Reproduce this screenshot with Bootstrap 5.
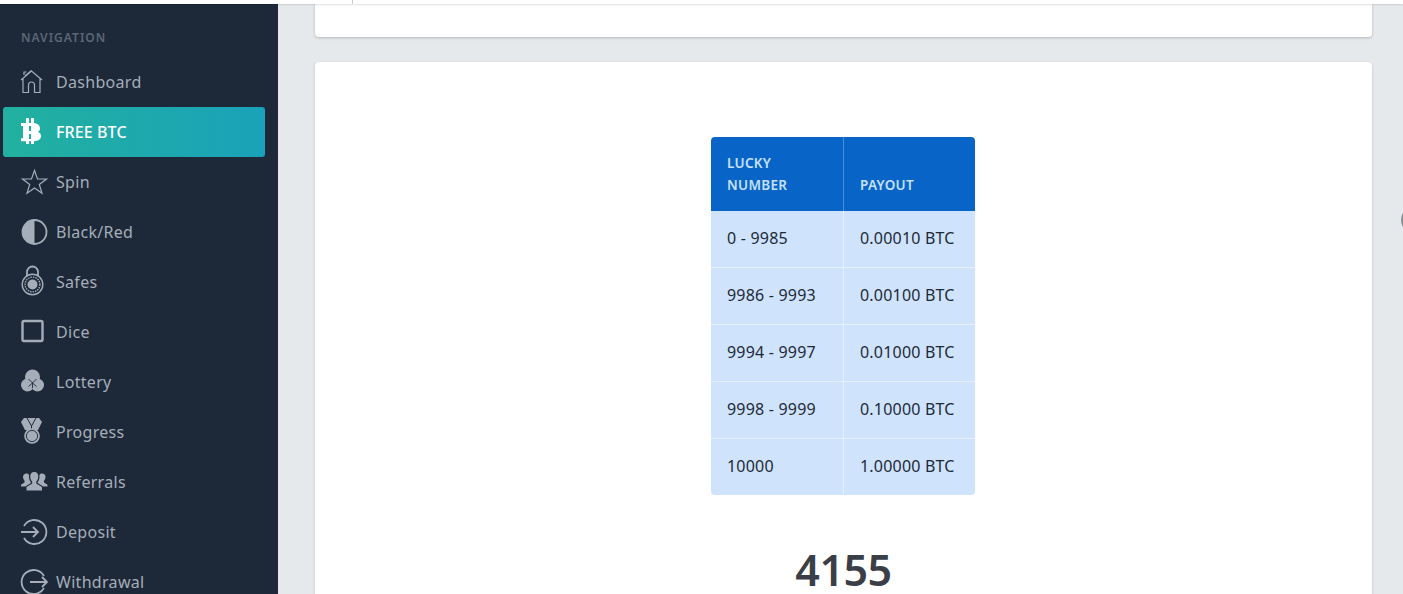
<!DOCTYPE html>
<html lang="en">
<head>
<meta charset="utf-8">
<title>FREE BTC</title>
<link href="https://cdn.jsdelivr.net/npm/bootstrap@5.3.0/dist/css/bootstrap.min.css" rel="stylesheet">
<style>
html,body{height:594px;overflow:hidden}
body{background:#e6e9ec;font-family:"Noto Sans","Liberation Sans",sans-serif;color:#3a3f47;position:relative}
.top-strip{height:4px;background:#fff;box-shadow:0 1px 2px rgba(0,0,0,.12);position:relative;z-index:2}
.top-tick{width:1px;height:4px;background:#c9cdd2;margin-left:352px}
.shell{height:590px}
.side-nav{width:278px;flex:none;background:#1d2939;overflow:hidden;padding:0 13px 0 3px}
.nav-head{font-size:12px;font-weight:600;letter-spacing:1px;color:#5b6675;padding:27px 0 0 18px;height:53px;line-height:13px}
.nav-row{height:50px;display:flex;align-items:center;color:#a5aeb8;font-size:16px;letter-spacing:.3px;text-decoration:none;border-radius:3px;padding-left:18px}
.nav-row svg{width:26px;height:26px;flex:none;margin-right:9px;overflow:visible}
.nav-row.is-on{background:linear-gradient(90deg,#22b19f,#19a2b9);color:#fff;font-weight:500;letter-spacing:.1px}
.main-pane{padding:0 31px 0 37px;min-width:0}
.panel-a{height:33px;background:#fff;border-radius:0 0 4px 4px;box-shadow:0 1px 3px rgba(0,0,0,.22);margin-bottom:25px}
.panel-b{background:#fff;border-radius:4px;box-shadow:0 1px 3px rgba(0,0,0,.18);padding-top:75px;height:700px;text-align:center}
.odds{width:264px;margin:0 0 45px 396px;border-collapse:separate;border-spacing:0;font-size:16px;letter-spacing:.2px;text-align:left}
.odds th{background:#0865c7;color:#c6e0fb;font-size:13.5px;font-weight:600;letter-spacing:.3px;line-height:22px;padding:15px 15px 15px 16px;vertical-align:bottom;height:74px}
.odds td{background:#cfe4fc;color:#1d2939;height:57px;padding:0 12px 2px 16px;vertical-align:middle;border-top:1px solid #e4f0fd}
.odds tbody tr:first-child td{border-top:0;height:56px}
.odds th:first-child,.odds td:first-child{width:133px;border-right:1px solid #e4f0fd}
.odds th:first-child{border-right-color:#4a8fd8;border-top-left-radius:4px}
.odds th:last-child{border-top-right-radius:4px}
.odds tr:last-child td:first-child{border-bottom-left-radius:4px}
.odds tr:last-child td:last-child{border-bottom-right-radius:4px}
.roll-num{font-size:43px;font-weight:600;color:#3a3f47;line-height:60px;margin:0;letter-spacing:-.5px}
.edge-dot{position:absolute;left:1401px;top:206px;width:28px;height:28px;border-radius:50%;background:#8a8f96}
</style>
</head>
<body>
<div class="top-strip"><div class="top-tick"></div></div>
<div class="shell d-flex">
  <nav class="side-nav">
    <div class="nav-head">NAVIGATION</div>
    <a class="nav-row" href="#"><svg viewBox="0 0 26 26" fill="none" stroke="#a5aeb8" stroke-width="1.200"><path d="M0 11 10.500 2 21 11M3 6V3h2.500M2 10v13.500h5.500V16a3 3 0 0 1 6 0v7.500H19V10M4 7l6.500-5.500"/></svg>Dashboard</a>
    <a class="nav-row is-on" href="#"><svg viewBox="0 0 26 26" fill="#fff"><path fill-rule="evenodd" d="M0 4h5V-1h3v5h2V-1h3v5c4 .5 6 2.500 6 5.500 0 1.600-.8 2.800-2 3.400 2 .7 3 2.200 3 4.100 0 3.300-2.500 5-7 5.300V25h-3v-2.700H8V25H5v-2.700H0v-3h2V7H0zM8 7v5h2V7zM8 15v5h2v-5z"/></svg>FREE BTC</a>
    <a class="nav-row" href="#"><svg viewBox="0 0 26 26" fill="none" stroke="#a5aeb8" stroke-width="1.200"><path d="M13.500 1.500l3 8.500h9l-7.200 5.400 2.700 8.800-7.500-5.300L6 24.200l2.700-8.800L1.500 10h9z"/></svg>Spin</a>
    <a class="nav-row" href="#"><svg viewBox="0 0 26 26"><circle cx="13.500" cy="13" r="12" fill="none" stroke="#a5aeb8" stroke-width="1.800"/><path d="M13.500 1a12 12 0 0 0 0 24z" fill="#a5aeb8"/></svg>Black/Red</a>
    <a class="nav-row" href="#"><svg viewBox="0 0 26 26" fill="none" stroke="#a5aeb8"><path stroke-width="1.800" d="M6 7V3a5.500 5.500 0 0 1 11 0v4"/><circle cx="11.500" cy="15.500" r="10.300" stroke-width="1.400"/><circle cx="11.500" cy="15.500" r="7.400" stroke-width="1.400" stroke-dasharray="1.500 1"/><circle cx="11.500" cy="15.500" r="5" fill="#a5aeb8" stroke="none"/></svg>Safes</a>
    <a class="nav-row" href="#"><svg viewBox="0 0 26 26" fill="none" stroke="#a5aeb8" stroke-width="2.400"><rect x="1.500" y="2" width="20" height="20" rx="1.500"/></svg>Dice</a>
    <a class="nav-row" href="#"><svg viewBox="0 0 26 26" fill="#a5aeb8"><circle cx="11.500" cy="8" r="7.500"/><circle cx="6.500" cy="16" r="6.500"/><circle cx="16.500" cy="16" r="6.500"/><path d="M11.500 14v5M11.500 14l-4 3.500M11.500 14l4 3.500M7.500 10l4 4 4-4" fill="none" stroke="#1d2939" stroke-width=".9"/></svg>Lottery</a>
    <a class="nav-row" href="#"><svg viewBox="0 0 26 26" fill="#a5aeb8"><path d="M0 3 3-1h15l3 4-4 8H4z"/><path d="M6 -1l4.500 8L15-1M10.500 7v3" fill="none" stroke="#1d2939" stroke-width="1"/><circle cx="11" cy="17" r="7.800"/><circle cx="11" cy="17" r="5.600" fill="none" stroke="#1d2939" stroke-width=".9"/></svg>Progress</a>
    <a class="nav-row" href="#"><svg viewBox="0 0 26 26" fill="#a5aeb8"><path d="M13.300 3c2.700 0 4 2 4 4.500 0 2.300-.9 4.100-2 5.100v1.900l5.700 3.500v3.500H5.500V18l5.700-3.500v-1.900c-1.100-1-2-2.800-2-5.100 0-2.500 1.300-4.500 4.100-4.500z"/><path d="M5.500 4.500c1.400 0 2.200.7 2.600 1.700-.4 2.400.2 5 1.800 7v.8L4.300 17.500H0v-1.700l3.500-2.300V11.500C2.500 10.500 2 9 2 7.700 2 5.800 3.500 4.500 5.500 4.500zM21 4.500c-1.400 0-2.200.7-2.600 1.700.4 2.400-.2 5-1.800 7v.8l5.600 3.500H26.500v-1.700L23 13.500V11.500c1-1 1.500-2.500 1.500-3.800 0-1.900-1.500-3.200-3.500-3.200z"/></svg>Referrals</a>
    <a class="nav-row" href="#"><svg viewBox="0 0 26 26" fill="none" stroke="#a5aeb8" stroke-width="1.800"><path d="M3 7a12 12 0 1 1 0 12M0 13h17M12 8l5 5-5 5"/></svg>Deposit</a>
    <a class="nav-row" href="#"><svg viewBox="0 0 26 26" fill="none" stroke="#a5aeb8" stroke-width="1.800"><path d="M23 7a12 12 0 1 0 0 12M9 13h17M21 8l5 5-5 5"/></svg>Withdrawal</a>
  </nav>
  <main class="main-pane flex-grow-1">
    <div class="panel-a"></div>
    <div class="panel-b">
      <table class="odds">
        <thead><tr><th>LUCKY NUMBER</th><th>PAYOUT</th></tr></thead>
        <tbody>
          <tr><td>0 - 9985</td><td>0.00010 BTC</td></tr>
          <tr><td>9986 - 9993</td><td>0.00100 BTC</td></tr>
          <tr><td>9994 - 9997</td><td>0.01000 BTC</td></tr>
          <tr><td>9998 - 9999</td><td>0.10000 BTC</td></tr>
          <tr><td>10000</td><td>1.00000 BTC</td></tr>
        </tbody>
      </table>
      <p class="roll-num">4155</p>
    </div>
  </main>
</div>
<div class="edge-dot"></div>
<script src="https://cdn.jsdelivr.net/npm/bootstrap@5.3.0/dist/js/bootstrap.bundle.min.js"></script>
</body>
</html>
